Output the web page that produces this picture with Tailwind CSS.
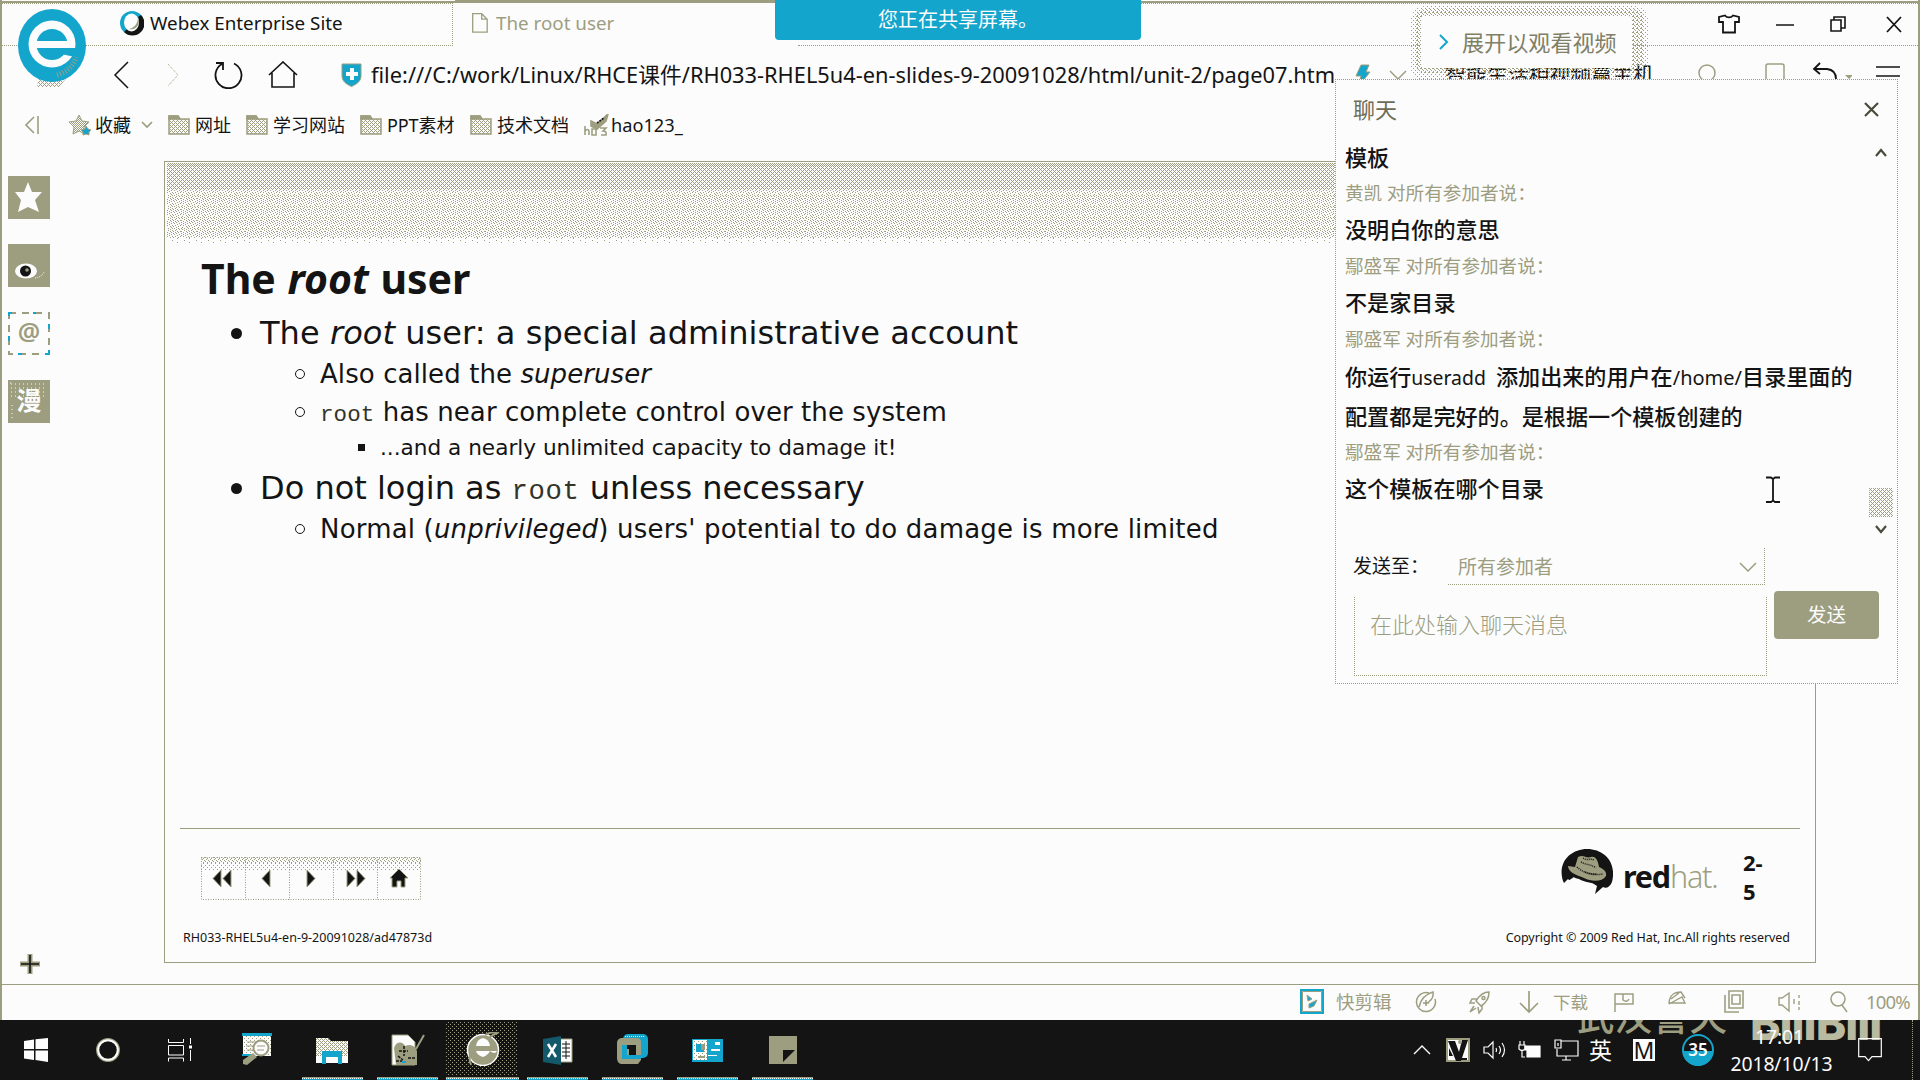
<!DOCTYPE html>
<html lang="zh-CN">
<head>
<meta charset="utf-8">
<title>The root user</title>
<script src="https://cdn.jsdelivr.net/npm/@tailwindcss/browser@4"></script>
</head>
<body class="relative flex h-[1080px] w-[1920px] flex-col overflow-hidden bg-[#fcfcfc] font-['Noto_Sans','Noto_Sans_CJK_SC',sans-serif] text-[#141414]">

<!-- shared dither patterns -->
<svg class="absolute size-0">
  <defs>
    <pattern id="d50" width="2" height="2" patternUnits="userSpaceOnUse"><path d="M0 0h1v1H0zM1 1h1v1H1z" fill="#9d9e80" shape-rendering="crispEdges"/></pattern>
    <pattern id="d37" width="4" height="4" patternUnits="userSpaceOnUse"><path d="M0 0h1v1H0zM2 0h1v1H2zM1 1h1v1H1zM0 2h1v1H0zM2 2h1v1H2zM3 3h1v1H3z" fill="#9d9e80" shape-rendering="crispEdges"/></pattern>
    <pattern id="d25" width="4" height="4" patternUnits="userSpaceOnUse"><path d="M0 0h1v1H0zM2 1h1v1H2zM1 2h1v1H1zM3 3h1v1H3z" fill="#9d9e80" shape-rendering="crispEdges"/></pattern>
    <pattern id="d12" width="4" height="4" patternUnits="userSpaceOnUse"><path d="M0 0h1v1H0zM2 2h1v1H2z" fill="#9d9e80" shape-rendering="crispEdges"/></pattern>
    <pattern id="dn" width="16" height="11" patternUnits="userSpaceOnUse"><path d="M0 0h1v1H0zM3 0h1v1H3zM7 0h1v1H7zM9 0h1v1H9zM13 0h1v1H13zM1 1h1v1H1zM5 1h1v1H5zM11 1h1v1H11zM14 1h1v1H14zM3 2h1v1H3zM7 2h1v1H7zM10 2h1v1H10zM0 3h1v1H0zM5 3h1v1H5zM8 3h1v1H8zM12 3h1v1H12zM15 3h1v1H15zM2 4h1v1H2zM6 4h1v1H6zM10 4h1v1H10zM13 4h1v1H13zM0 5h1v1H0zM4 5h1v1H4zM8 5h1v1H8zM11 5h1v1H11zM2 6h1v1H2zM6 6h1v1H6zM9 6h1v1H9zM14 6h1v1H14zM0 7h1v1H0zM4 7h1v1H4zM12 7h1v1H12zM7 8h1v1H7zM10 8h1v1H10zM15 8h1v1H15zM2 8h1v1H2zM5 9h1v1H5zM8 9h1v1H8zM13 9h1v1H13zM1 10h1v1H1zM11 10h1v1H11zM6 10h1v1H6z" fill="#9d9e80" shape-rendering="crispEdges"/></pattern>
    <pattern id="d3" width="12" height="4" patternUnits="userSpaceOnUse"><path d="M0 0h1v1H0zM7 2h1v1H7z" fill="#9d9e80" shape-rendering="crispEdges"/></pattern>
    <pattern id="dc" width="4" height="3" patternUnits="userSpaceOnUse"><path fill="#14a5cc" d="M0 0h4v3H0z"/><path d="M0 1h1v1H0zM2 1h1v1H2z" fill="#fcfcfc"/></pattern>
  </defs>
</svg>

<!-- window frame -->
<div class="absolute left-0 top-0 h-[1020px] w-0.5 bg-[#9d9e80]"></div>
<div class="absolute right-0 top-0 h-[1020px] w-0.5 bg-[#9d9e80]"></div>
<div class="absolute left-0 top-px h-0.5 w-full bg-[#9d9e80]"></div>
<div class="absolute left-[455px] top-0 h-[3px] w-80 bg-[#9d9e80]"></div>

<!-- tab row -->
<header class="flex h-[46px] shrink-0 pl-0.5 pt-[3px]">
  <div class="flex w-[451px] items-center border-b border-r border-t border-dotted border-[#9d9e80] pb-1 pl-[118px]">
    <svg class="h-[26px] w-6" viewBox="0 0 24 26"><circle cx="12" cy="13" r="12" fill="#14a5cc"/><path d="M21 5a12 12 0 0 1-17 17l3-3c6 4 14-4 11-12z" fill="#141414"/><ellipse cx="11.5" cy="12.500" rx="7.500" ry="9" fill="#fcfcfc"/><path d="M18 7c3 7-2 14-9 12 5-1 9-5 9-12z" fill="#9d9e80"/></svg>
    <span class="ml-[6px] text-[18.8px] leading-6">Webex Enterprise Site</span>
  </div>
  <div class="flex w-[345px] items-center pb-1 pl-[19px] text-[#9d9e80]">
    <svg class="h-5 w-4" viewBox="0 0 16 20" fill="none" stroke="currentColor" stroke-width="1.300"><path d="M.7.700h9l5.500 5.500v13H.7zM9.700.700v5.500h5.500"/></svg>
    <span class="ml-2 text-[18.8px] leading-6">The root user</span>
  </div>
  <div class="flex flex-1 items-center justify-end border-b border-t border-dotted border-[#9d9e80] pb-0.5 pr-[18px]">
    <svg class="h-5 w-[22px]" viewBox="0 0 22 20" fill="none" stroke="currentColor" stroke-width="1.800"><path d="M7 1.500c2 2.500 6 2.500 8 0l6 1.500v5h-4v10.500H5V8H1V3z"/></svg>
    <svg class="ml-9 h-5 w-[18px]" viewBox="0 0 18 20" stroke="currentColor" stroke-width="1.500"><path d="M0 11h18"/></svg>
    <svg class="ml-9 h-5 w-4" viewBox="0 0 16 20" fill="none" stroke="currentColor" stroke-width="1.600"><path d="M1 6h10v11H1zM4 6V3h11v11h-4"/></svg>
    <svg class="ml-10 h-5 w-4" viewBox="0 0 16 20" stroke="currentColor" stroke-width="1.800"><path d="m1 3 14 15M15 3 1 18"/></svg>
  </div>
</header>

<!-- navigation row -->
<nav class="flex h-[58px] shrink-0 items-center pl-[113px]">
  <svg class="h-7 w-4" viewBox="0 0 16 28" fill="none" stroke="currentColor" stroke-width="1.500"><path d="M15 1 2 14l13 13"/></svg>
  <svg class="ml-[38px] h-7 w-3" viewBox="0 0 12 28" fill="none" stroke="#9d9e80" stroke-dasharray="1 1"><path d="m1 3 10 11L1 25"/></svg>
  <svg class="ml-[34px] h-7 w-[30px]" viewBox="0 0 30 28" fill="none" stroke="currentColor" stroke-width="1.800"><path d="M21 2.500A13 13 0 1 1 9 3M3 2h7v7"/></svg>
  <svg class="ml-[25px] h-7 w-[30px]" viewBox="0 0 30 28" fill="none" stroke="currentColor" stroke-width="1.600"><path d="M1 14 15 1l14 13M4 12v14h22V12"/></svg>
  <svg class="ml-[43px] h-6 w-[21px]" viewBox="0 0 21 24"><path d="M1 1h19v12c0 5-4 8-9.500 10.500C5 21 1 18 1 13z" fill="#14a5cc" stroke="#9d9e80"/><path d="M9 5h4v4h4v4h-4v4H9v-4H5V9h4z" fill="#fcfcfc"/></svg>
  <span class="ml-[9px] w-[969px] whitespace-nowrap text-[21.8px] leading-8">file:///C:/work/Linux/RHCE课件/RH033-RHEL5u4-en-slides-9-20091028/html/unit-2/page07.htm</span>
  <svg class="ml-[15px] h-7 w-4" viewBox="0 0 16 28"><path d="M6 4h8l-3 7h4L3 26l3-11H1z" fill="#14a5cc" stroke="#9d9e80"/></svg>
  <svg class="ml-[18px] h-4 w-[18px] text-[#9d9e80]" viewBox="0 0 18 16" fill="none" stroke="currentColor" stroke-width="1.500"><path d="m1 4 8 8 8-8"/></svg>
  <span class="ml-[38px] w-[208px] whitespace-nowrap pb-[3px] text-[20.9px] leading-8">智能生活相视频赢主机</span>
  <svg class="ml-[45px] h-7 w-5 text-[#9d9e80]" viewBox="0 0 20 28" fill="none" stroke="currentColor" stroke-width="1.500"><circle cx="9" cy="12" r="8"/><path d="m15 18 4 6"/></svg>
  <svg class="ml-[46px] h-7 w-[22px] text-[#9d9e80]" viewBox="0 0 22 28" fill="none" stroke="currentColor" stroke-width="1.500"><rect x="2" y="3" width="18" height="18" rx="2"/></svg>
  <svg class="ml-[26px] h-7 w-10" viewBox="0 0 40 28" fill="none" stroke="currentColor" stroke-width="1.800"><path d="M8 2 2 8l6 5M2 8h13q9 1 9 10v3"/><path d="M33 14h8l-4 4z" fill="#9d9e80" stroke="none"/></svg>
  <svg class="ml-[24px] h-7 w-6" viewBox="0 0 24 28" stroke="currentColor" stroke-width="1.500"><path d="M0 6h24M0 15h24"/></svg>
</nav>

<!-- bookmarks row -->
<div class="flex h-[45px] shrink-0 items-center pb-[3px] pl-[25px] text-[18px] leading-6">
  <svg class="h-[18px] w-[14px] text-[#9d9e80]" viewBox="0 0 14 18" fill="none" stroke="currentColor" stroke-width="1.600"><path d="M9 1 1 9l8 8M13 0v18"/></svg>
  <svg class="ml-[30px] h-[22px] w-[23px]" viewBox="0 0 23 22"><path d="m10 1 3 6 7 1-5 5 1 7-6-3-6 3 1-7-5-5 7-1z" fill="url(#d50)" stroke="#9d9e80"/><path d="m17 12 2 3 3 1-2 2v3l-3-1-3 1v-3l-2-2 4-1z" fill="#14a5cc" stroke="#9d9e80"/></svg>
  <span class="ml-[3px] w-9">收藏</span>
  <svg class="ml-2.5 h-2.5 w-3 text-[#9d9e80]" viewBox="0 0 12 10" fill="none" stroke="currentColor" stroke-width="1.700"><path d="m1 2 5 5 5-5"/></svg>
  <svg class="ml-[15px] h-5 w-[22px]" viewBox="0 0 22 20" stroke="#9d9e80" stroke-width="1.500"><path d="M1 1h9l2 3h9v15H1z" fill="url(#d37)"/><path d="M1 1h9l2 3H1z" fill="#9d9e80"/></svg>
  <span class="ml-[5px] w-9">网址</span>
  <svg class="ml-[15px] h-5 w-[22px]" viewBox="0 0 22 20" stroke="#9d9e80" stroke-width="1.500"><path d="M1 1h9l2 3h9v15H1z" fill="url(#d37)"/><path d="M1 1h9l2 3H1z" fill="#9d9e80"/></svg>
  <span class="ml-[5px] w-[72px]">学习网站</span>
  <svg class="ml-[15px] h-5 w-[22px]" viewBox="0 0 22 20" stroke="#9d9e80" stroke-width="1.500"><path d="M1 1h9l2 3h9v15H1z" fill="url(#d37)"/><path d="M1 1h9l2 3H1z" fill="#9d9e80"/></svg>
  <span class="ml-[5px] w-[68px] whitespace-nowrap tracking-[-0.1px]">PPT素材</span>
  <svg class="ml-[15px] h-5 w-[22px]" viewBox="0 0 22 20" stroke="#9d9e80" stroke-width="1.500"><path d="M1 1h9l2 3h9v15H1z" fill="url(#d37)"/><path d="M1 1h9l2 3H1z" fill="#9d9e80"/></svg>
  <span class="ml-[5px] w-[72px]">技术文档</span>
  <svg class="ml-[15px] h-[22px] w-[25px]" viewBox="0 0 25 22" fill="none" stroke="#9d9e80" stroke-width="1.600"><path d="M7 7l6 3L24 0l-2 7-9 8-6-3z" fill="#9d9e80"/><path d="M1 21v-9M1 17q3-3 4 0v4M8 15h4v6H8zM16 14h6l-3 3q4 0 3 4h-5"/><path d="m13 9 7-5" stroke="#141414" stroke-dasharray="2 1"/></svg>
  <span class="ml-[2px] text-[18.2px]">hao123_</span>
</div>

<!-- page area -->
<main class="flex min-h-0 flex-1">
  <aside class="flex w-[164px] flex-col pb-[10px] pl-2 pt-[27px]">
    <svg class="h-[43px] w-[42px]" viewBox="0 0 42 43"><path d="M0 0h42v43H0z" fill="#9d9e80"/><path d="m20 6 4 10h10l-7 8 4 12-11-5-10 5 3-12-6-8h9z" fill="#fcfcfc"/></svg>
    <svg class="mt-[25px] h-[43px] w-[42px]" viewBox="0 0 42 43"><path d="M0 0h42v43H0z" fill="#9d9e80"/><ellipse cx="18" cy="27" rx="11" ry="7.500" fill="#fcfcfc"/><circle cx="17.500" cy="27" r="5.500" fill="#141414"/><circle cx="19" cy="26" r="1.800" fill="#9d9e80"/><path d="M27 34q7-1 9-6" stroke="#fcfcfc" stroke-dasharray="1 1" fill="none"/></svg>
    <svg class="mt-[25px] h-[43px] w-[42px]" viewBox="0 0 42 43"><rect x="1" y="1" width="40" height="41" fill="none" stroke="#9d9e80" stroke-width="2" stroke-dasharray="7 6"/><path d="M1 4V1h3M28 1h-3M41 12v5M1 24v5M10 42h4M37 42h4v-4" stroke="#14a5cc" stroke-width="2" fill="none"/><text x="21" y="29" text-anchor="middle" class="fill-[#9d9e80] font-['Noto_Sans'] text-[25px] font-semibold">@</text></svg>
    <svg class="mt-[25px] h-[43px] w-[42px]" viewBox="0 0 42 43"><path d="M0 0h42v43H0z" fill="#9d9e80"/><path d="M2 3h1v1H2zM4 38V23M3 4h36M3 8h36M3 12h36M3 16h36" stroke="#fcfcfc" stroke-dasharray="1 3" fill="none"/><text x="21" y="30" text-anchor="middle" class="fill-[#fcfcfc] font-['Noto_Sans_CJK_SC'] text-[25px] font-bold">漫</text></svg>
    <svg class="ml-3 mt-auto h-5 w-5" viewBox="0 0 20 20"><path d="M7.500 0h5v20h-5zM0 7.500h20v5H0z" fill="#9d9e80"/><path d="M9.200 1h1.600v18H9.200zM1 9.200h18v1.600H1z" fill="#141414"/></svg>
  </aside>

  <article class="mb-[21px] mt-3 flex w-[1652px] flex-col border border-[#9d9e80] font-['DejaVu_Sans','Noto_Sans_CJK_SC',sans-serif]">
    <svg class="h-[84px] w-full shrink-0"><path d="M2 1h1648v3H2z" fill="url(#d50)"/><path d="M2 4h1648v24H2z" fill="url(#d37)"/><path d="M2 28h1648v48H2z" fill="url(#dn)"/><path d="M4 76h1640v6H4z" fill="url(#d3)"/></svg>
    <h1 class="h-16 pl-9 font-['Noto_Sans'] text-[41px] font-bold leading-[64px]">The <i class="ml-px">root</i><span class="ml-px"> user</span></h1>
    <div class="flex h-[46px] items-center pl-[66px]"><b class="size-[11px] rounded-full bg-[#141414]"></b><p class="ml-[18px] text-[32px] leading-[46px] tracking-[0.06px]">The <i>root</i> user: a special administrative account</p></div>
    <div class="flex h-[36px] items-center pl-[130px]"><b class="size-2.5 rounded-full border border-[#141414]"></b><p class="ml-[15px] text-[26px] leading-[36px] tracking-[0.08px]">Also called the <i>superuser</i></p></div>
    <div class="flex h-[40px] items-center pl-[130px]"><b class="size-2.5 rounded-full border border-[#141414]"></b><p class="ml-[15px] text-[26px] leading-[40px] tracking-[0.08px]"><span class="font-['Liberation_Mono'] text-[22.5px] leading-none text-[#33342a]">root</span> has near complete control over the system</p></div>
    <div class="flex h-[31px] items-center pl-[193px]"><b class="size-[7px] bg-[#141414]"></b><p class="ml-[15px] text-[21.6px] leading-[31px]">...and a nearly unlimited capacity to damage it!</p></div>
    <div class="flex h-[50px] items-center pl-[66px]"><b class="size-[11px] rounded-full bg-[#141414]"></b><p class="ml-[18px] text-[32px] leading-[50px]">Do not login as <span class="font-['Liberation_Mono'] text-[27.3px] leading-none tracking-[0.6px] text-[#33342a]">root</span> unless necessary</p></div>
    <div class="flex h-[32px] items-center pl-[130px]"><b class="size-2.5 rounded-full border border-[#141414]"></b><p class="ml-[15px] text-[26px] leading-[32px] tracking-[0.18px]">Normal (<i>unprivileged</i>) users' potential to do damage is more limited</p></div>

    <footer class="mx-[15px] mt-auto flex h-[134px] flex-col border-t border-[#9d9e80]">
      <div class="mt-[19px] flex h-[62px] justify-between pl-[21px] pr-[35px]">
        <svg class="mt-[9px] h-11 w-[221px]" viewBox="0 0 221 44">
          <path d="M0 0h220v6H0z" fill="url(#d25)"/><path d="M0 6h220v7H0z" fill="url(#d12)"/>
          <path d="M.5.500h219v42H.5zM44.500 0v43M88.500 0v43M132.500 0v43M176.500 0v43" fill="none" stroke="#9d9e80" stroke-dasharray="1 1.500"/>
          <g fill="#141414" stroke="#9d9e80"><path d="M20 13v17l-8-8.500zM30 13v17l-8-8.500zM69 13v17l-8-8.500zM106 13v17l8-8.500zM146 13v17l8-8.500zM156 13v17l8-8.500z"/><path d="m198 12 9 9h-3v9h-4v-6h-4v6h-5v-9h-2z"/></g>
        </svg>
        <div class="flex font-['Noto_Sans']">
          <svg class="h-[46px] w-[52px]" viewBox="0 0 52 46"><path d="M2 33C-4 14 10 1 26 1c17 0 30 13 25 33-2 5-6 7-9 5l-8 7 2-8c-6-5-12-3-18-7l-4-1-4 4-3-3-4 4z" fill="#141414"/><path d="M17 9c6-3 8 2 13 0 5-1 7 4 8 10 5 2 8 5 7 9-4 6-14 6-22 2C15 27 7 24 7 18l7 1z" fill="#9d9e80"/><path d="M22 10c4 3 8 0 11 2M16 19c6 6 14 7 20 7M20 14c5 3 10 2 15 6M24 24c5 3 12 3 18 2" stroke="#141414" stroke-width="1.500" stroke-dasharray="1 1" fill="none"/><path d="M7 33l6-4 8 8 9-1 3 4-4 2z" fill="#fcfcfc"/></svg>
          <p class="-mt-px ml-[10px] w-[98px] whitespace-nowrap text-[30.5px] leading-[58px] tracking-[-1.2px]"><b>red</b><span class="font-light text-[#9d9e80]">hat.</span></p>
          <div class="ml-[22px] w-[22px] text-[22px] font-bold leading-[29px]"><p>2-</p><p>5</p></div>
        </div>
      </div>
      <div class="flex justify-between pl-[3px] pr-2.5 pt-[18px] font-['Noto_Sans'] text-[12.5px] leading-[20px]"><p>RH033-RHEL5u4-en-9-20091028/ad47873d</p><p class="tracking-[-0.06px]">Copyright © 2009 Red Hat, Inc.All rights reserved</p></div>
    </footer>
  </article>
</main>

<!-- browser status bar -->
<div class="mx-0.5 flex h-9 shrink-0 items-center justify-end border-t border-[#9d9e80] pb-0.5 pr-2 text-[18.5px] leading-6 text-[#9d9e80]">
  <svg class="h-[25px] w-6" viewBox="0 0 24 25" fill="none"><rect x="1" y="1" width="22" height="23" stroke="#14a5cc" stroke-width="2"/><path d="M2.500 2.500h19v20h-19z" stroke="#9d9e80"/><path d="m7 6 5 4-4 2zM9 15l8-4-3 6-5 2z" fill="#14a5cc" stroke="#9d9e80"/></svg>
  <span class="ml-3 w-[55px] whitespace-nowrap">快剪辑</span>
  <svg class="ml-6 h-6 w-[22px]" viewBox="0 0 22 24" fill="none" stroke="currentColor" stroke-width="1.500"><path d="M14 3A9.500 9.500 0 1 0 20 9M4 17C6 8 11 4 18 2c1 6-3 10-8 12M11 10v6M8 13h6"/></svg>
  <svg class="ml-8 h-6 w-[22px]" viewBox="0 0 22 24" fill="none" stroke="currentColor" stroke-width="1.500"><path d="M20 2c-6 0-10 4-13 9l5 5c5-3 8-7 8-14zM8 9H3l-2 4h5M13 15v4l-3 4-1-6M5 16l-4 6 6-4"/><circle cx="14.500" cy="8" r="1.500"/></svg>
  <svg class="ml-7 h-6 w-5" viewBox="0 0 20 24" fill="none" stroke="currentColor" stroke-width="1.700"><path d="M10 1v21M1 13l9 9 9-9"/></svg>
  <span class="ml-3.5 w-[35px] whitespace-nowrap text-[17.6px]">下载</span>
  <svg class="ml-[26px] h-6 w-5" viewBox="0 0 20 24" fill="none" stroke="currentColor" stroke-width="1.500"><path d="M1 22V4h18v10H1M9 4v6q4 3 6-1"/></svg>
  <svg class="ml-[34px] h-6 w-[18px]" viewBox="0 0 18 24" fill="none" stroke="currentColor" stroke-width="1.400"><path d="M1 14C1 6 6 2 13 2l4 6M1 14l13-7 3 6H1M3 9l8-6"/></svg>
  <svg class="ml-[38px] h-6 w-[20px]" viewBox="0 0 20 24" fill="none" stroke="currentColor" stroke-width="1.600"><path d="M5 1h14v17H5zM1 5v17h14M8 5h8v9H8z"/></svg>
  <svg class="ml-[34px] h-6 w-[24px]" viewBox="0 0 24 24" fill="none" stroke="currentColor" stroke-width="1.400"><path d="M1 8v7h3l7 6V3L4 8z"/><path d="M16 9v5M21 5v3M21 11v4M21 17v3"/></svg>
  <svg class="ml-[28px] h-6 w-[18px]" viewBox="0 0 18 24" fill="none" stroke="currentColor" stroke-width="1.500"><circle cx="8" cy="9" r="7"/><path d="m12 15 5 7"/></svg>
  <span class="ml-[18px] w-[44px] whitespace-nowrap text-[18.5px] tracking-[-0.8px]">100%</span>
</div>

<!-- taskbar -->
<div class="relative flex h-[60px] shrink-0 overflow-hidden bg-[#141414] text-[#fcfcfc]">
  <div class="absolute left-[1577px] top-[-32px] whitespace-nowrap text-[37.500px] font-medium leading-[56px] text-[#9d9e80]">武汉誉天</div>
  <div class="absolute left-[1750px] top-[-25px] whitespace-nowrap font-['Inter'] text-[46px] font-extrabold leading-[56px] tracking-[-1px] text-[#b9ba9f]">BiliBili</div>

  <div class="flex w-[216px] items-center gap-12 pl-6">
    <svg class="size-6" viewBox="0 0 24 24" fill="currentColor"><path d="m0 3 10-1.500V11H0zM11.500 1.300 24 0v11H11.500zM0 12.500h10V22L0 20.500zM11.500 12.500H24V24l-12.500-2z"/></svg>
    <svg class="size-6" viewBox="0 0 24 24" fill="none"><circle cx="12" cy="12" r="10.500" stroke="#9d9e80" stroke-width="3"/><circle cx="12" cy="12" r="9.800" stroke="#fcfcfc" stroke-width="2"/></svg>
    <svg class="size-6" viewBox="0 0 24 24" fill="none" stroke="currentColor"><path d="M.5 1v3.500h15V1M.5 7.500h15v9.500H.5zM.5 23.500V20h15v3.500M22.500 0v6M22.500 12v11"/><path d="M21 7.500h3v3h-3z" fill="currentColor" stroke="none"/></svg>
  </div>
  <div class="flex w-[77px] flex-col items-center pl-1.5 pt-3"><svg class="h-[34px] w-[31px]" viewBox="0 0 31 34"><path d="M1 2h28v22H1z" fill="#fcfcfc"/><path d="M1 4h28v20H1z" fill="url(#d12)"/><path d="M0 1h30v3H0zM0 22h10v2H0z" fill="#14a5cc"/><path d="M5 10h11M4 14h10M5 18h10" stroke="#9d9e80"/><circle cx="19" cy="16" r="7.500" fill="#fcfcfc" stroke="#9d9e80" stroke-width="2"/><path d="M15 14h8M15 18h7" stroke="#9d9e80"/><path d="m11 21 4 4-10 8-4-1v-4z" fill="#9d9e80"/></svg></div>
  <div class="flex w-[78px] flex-col items-center justify-between pt-[17px]"><svg class="h-7 w-8" viewBox="0 0 32 28"><path d="M0 1h12l3 3h17v22H0z" fill="#fcfcfc"/><path d="M0 1h12l3 3h17v15H0z" fill="url(#d37)"/><path d="M6 27V14h20v13h-4v-7H10v7z" fill="#14a5cc"/></svg><svg class="h-[3px] w-[61px]"><path d="M0 0h61v3H0z" fill="url(#dc)"/><path d="M0 0h61v1H0z" fill="#9d9e80"/></svg></div>
  <div class="flex w-[73px] flex-col items-center justify-between pt-[14px]"><svg class="h-8 w-[34px]" viewBox="0 0 34 32"><path d="M1 1h16l7 7v23H1z" fill="#fcfcfc" stroke="#9d9e80"/><path d="m33 1-8 14" stroke="#9d9e80" stroke-width="2"/><path d="M3 14c2-7 9-7 11-2 6-3 13 1 12 8v11H5z" fill="#9d9e80"/><path d="M8 17h9M13 12v10M17 24h8M7 22l5 4M5 27h6" stroke="#141414" stroke-width="1.500" stroke-dasharray="3 1"/><path d="M11 28h4" stroke="#14a5cc" stroke-width="2"/></svg><svg class="h-[3px] w-[61px]"><path d="M0 0h61v3H0z" fill="url(#dc)"/><path d="M0 0h61v1H0z" fill="#9d9e80"/></svg></div>
  <div class="relative ml-0.5 flex w-[73px] flex-col items-center justify-between pt-3"><svg class="absolute left-0 top-0 h-[57px] w-[73px]"><rect y="1" width="72" height="55" rx="4" fill="url(#d12)"/></svg><svg class="relative h-[34px] w-[34px]" viewBox="0 0 34 34"><circle cx="17" cy="18" r="15.500" fill="#9d9e80" stroke="#fcfcfc" stroke-width="1.500"/><path d="M17 6q6 1 7 8H10q1-7 7-8zM10 19h21q-2 4-7 0-2 4-7 6-6-2-7-6z" fill="#fcfcfc"/><path d="M19 3q7-4 12-2-5 2-8 5M4 22q-1 6 1 11" fill="none" stroke="#9d9e80" stroke-width="2"/></svg><svg class="relative h-[3px] w-[73px]"><path d="M0 0h73v3H0z" fill="url(#dc)"/><path d="M0 0h73v1H0z" fill="#9d9e80"/></svg></div>
  <div class="flex w-[77px] flex-col items-center justify-between pt-4"><svg class="h-[30px] w-[30px]" viewBox="0 0 30 30"><path d="M17 3h12v23H17z" fill="#fcfcfc" stroke="#9d9e80"/><path d="M19 8h8M19 12h8M19 16h8M19 20h8M23 5v18" stroke="#141414"/><path d="M0 3 18 0v29L0 26z" fill="#14586b"/><path d="m5 8 8 13M13 8 5 21" stroke="#fcfcfc" stroke-width="2.500"/></svg><svg class="h-[3px] w-[61px]"><path d="M0 0h61v3H0z" fill="url(#dc)"/><path d="M0 0h61v1H0z" fill="#9d9e80"/></svg></div>
  <div class="flex w-[73px] flex-col items-center justify-between pt-3"><svg class="h-[34px] w-[32px]" viewBox="0 0 32 34"><rect x="6" y="2" width="25" height="24" rx="5" fill="#14a5cc"/><path d="M8 3h20v3H8z" fill="url(#dc)"/><path d="M4 6h16q4 0 4 4v18l-3 4H4q-4-1-4-6V11q0-4 4-5z" fill="#9d9e80"/><path d="M5 13h5v10h14v4H5z" fill="#14a5cc"/><path d="M10 13h9v10H12v-6h-2z" fill="#141414"/></svg><svg class="h-[3px] w-[61px]"><path d="M0 0h61v3H0z" fill="url(#dc)"/><path d="M0 0h61v1H0z" fill="#9d9e80"/></svg></div>
  <div class="flex w-[77px] flex-col items-center justify-between pt-[19px]"><svg class="h-[23px] w-[31px]" viewBox="0 0 31 23"><path d="M0 0h31v23H0z" fill="#14a5cc"/><path d="M1 1h14v20H1z" fill="#fcfcfc"/><path d="M1 1h14v20H1z" fill="url(#d12)"/><path d="M4 5h8v8H4zM16 5h5v4h-5z" fill="#14a5cc"/><path d="M9 5h4v6H9zM6 17h7v2H6z" fill="#9d9e80"/><path d="M23 3h5v3h-5zM19 10h9v2h-9zM16 16h9v1h-9z" fill="#fcfcfc"/></svg><svg class="h-[3px] w-[61px]"><path d="M0 0h61v3H0z" fill="url(#dc)"/><path d="M0 0h61v1H0z" fill="#9d9e80"/></svg></div>
  <div class="flex w-[73px] flex-col items-center justify-between pt-4"><svg class="h-7 w-7" viewBox="0 0 28 28"><path d="M0 0h28v28H0z" fill="#9d9e80"/><path d="M14 14h12L14 26z" fill="#141414"/></svg><svg class="h-[3px] w-[61px]"><path d="M0 0h61v3H0z" fill="url(#dc)"/><path d="M0 0h61v1H0z" fill="#9d9e80"/></svg></div>

  <div class="relative ml-auto flex items-center pr-[7px]">
    <svg class="h-2.5 w-[18px]" viewBox="0 0 18 10" fill="none" stroke="currentColor" stroke-width="1.400"><path d="m1 9 8-8 8 8"/></svg>
    <svg class="ml-[15px] size-6" viewBox="0 0 24 24"><path d="M1 1h22v22H1z" fill="#fcfcfc" stroke="#9d9e80" stroke-width="2"/><path d="M2 3h7l4 11 3-12h6l-7 21h-5zM15 20h6v2h-6zM3 10l4 8H3z" fill="#141414"/><circle cx="14" cy="4" r="2" fill="#9d9e80"/></svg>
    <svg class="ml-[13px] h-5 w-[23px]" viewBox="0 0 23 20" fill="none" stroke="currentColor" stroke-width="1.200"><path d="M1 7v6h4l5 5V2L5 7zM13 8q1 2 0 4M16 6q3 4 0 8M19 3q5 7 0 14"/></svg>
    <svg class="ml-[12px] h-[18px] w-6" viewBox="0 0 24 18" fill="none" stroke="currentColor" stroke-width="1.200"><path d="M7 5h15v11H9V9H7z" fill="currentColor"/><path d="M1 4h6v4q-3 3-6 0zM2 0v4M6 0v4M4 9v7h3"/></svg>
    <svg class="ml-[12px] h-6 w-[25px]" viewBox="0 0 25 24" fill="none" stroke="currentColor" stroke-width="1.200"><path d="M7 3h17v15H3v-7M1 2h6v8H1zM4 5v3M12 18v4M8 22h9"/></svg>
    <span class="ml-[10px] w-6 text-[23px] leading-8">英</span>
    <span class="ml-[20px] flex h-[22px] w-[22px] items-center justify-center bg-[#fcfcfc] text-[23px] leading-[22px] text-[#141414]">M</span>
    <div class="relative ml-[27px] flex size-8 items-center justify-center">
      <svg class="absolute inset-0 size-8" viewBox="0 0 32 32"><path d="M1 17h30A15 15 0 0 1 1 17" fill="#14a5cc"/><circle cx="16" cy="16" r="15" fill="none" stroke="#14a5cc" stroke-width="2"/></svg>
      <span class="relative text-[17px] font-semibold leading-6">35</span>
    </div>
    <div class="ml-[15px] flex w-[105px] flex-col text-center text-[19.400px] leading-[27.5px] tracking-[-0.1px]"><span class="pr-1">17:01</span><span>2018/10/13</span></div>
    <svg class="ml-[24px] h-6 w-6" viewBox="0 0 24 24" fill="none" stroke="currentColor" stroke-width="1.200"><path d="M.7.700h22.600v18H14l-3.500 4-3.500-4H.7z"/></svg>
    <div class="ml-[30px] h-[60px] border-l border-dotted border-[#9d9e80]"></div>
  </div>
</div>

<!-- browser logo -->
<svg class="absolute left-[17px] top-[9px] h-[78px] w-[70px]" viewBox="0 0 70 78"><path d="M22 66h30l-10 12H20z" fill="url(#d37)"/><ellipse cx="35" cy="36.500" rx="34" ry="36.500" fill="#14a5cc"/><circle cx="35" cy="35" r="23.500" fill="#fcfcfc"/><circle cx="35" cy="35.500" r="15.500" fill="#14a5cc"/><path d="M19 32h39v7H19z" fill="#fcfcfc"/><path d="M34 39h28l-4 9-14-3H34z" fill="#14a5cc"/><path d="M40 66q16-5 19-18" stroke="#9d9e80" stroke-width="5" stroke-dasharray="1 2" fill="none"/></svg>

<!-- sharing banner -->
<div class="absolute left-[775px] top-0 flex h-10 w-[366px] items-center justify-center rounded-b-sm bg-[#14a5cc] text-[20px] leading-7 text-[#fcfcfc]">您正在共享屏幕。</div>

<!-- expand-video popup -->
<div class="absolute left-[1411px] top-1.5 h-[76px] w-[237px]">
  <svg class="absolute inset-0 h-full w-full"><rect width="237" height="76" rx="14" fill="url(#d12)"/><rect x="5" y="3" width="227" height="64" rx="8" fill="url(#d25)"/></svg>
  <div class="absolute left-2.5 top-2.5 flex h-[52px] w-[211px] items-center rounded bg-[#fcfcfc] pl-[18px] text-[22.1px] leading-8 text-[#7f8066]">
    <svg class="h-4 w-2.5" viewBox="0 0 10 16" fill="none" stroke="#14a5cc" stroke-width="2"><path d="m1 1 7 7-7 7"/></svg><span class="ml-[13px] whitespace-nowrap">展开以观看视频</span>
  </div>
</div>

<!-- chat panel -->
<section class="absolute left-[1335px] top-[79px] flex h-[605px] w-[563px] flex-col border border-dotted border-[#9d9e80] bg-[#fcfcfc]">
  <div class="flex h-[60px] items-center justify-between pb-0.5 pl-[17px] pr-[18px]">
    <h2 class="text-[22px] leading-8 text-[#6c6d56]">聊天</h2>
    <svg class="size-[15px]" viewBox="0 0 15 15" stroke="#4a4b3c" stroke-width="2.200"><path d="m1 1 13 13M14 1 1 14"/></svg>
  </div>
  <div class="flex h-[400px] justify-between pl-[9px] pr-1">
    <div class="w-[520px] text-[22.1px] font-medium">
      <p class="h-[34px] leading-[34px]">模板</p>
      <p class="h-[38px] text-[18.6px] font-normal leading-[38px] text-[#9d9e80]">黄凯 对所有参加者说：</p>
      <p class="h-[35px] leading-[35px]">没明白你的意思</p>
      <p class="h-[38px] text-[18.6px] font-normal leading-[38px] text-[#9d9e80]">鄢盛军 对所有参加者说：</p>
      <p class="h-[35px] leading-[35px]">不是家目录</p>
      <p class="h-[37px] text-[18.6px] font-normal leading-[37px] text-[#9d9e80]">鄢盛军 对所有参加者说：</p>
      <p class="h-[76px] whitespace-nowrap leading-[38px]">你运行<span class="text-[19.400px] font-normal">useradd&nbsp; </span>添加出来的用户在<span class="text-[20px] font-normal">/home/</span>目录里面的<br>配置都是完好的。是根据一个模板创建的</p>
      <p class="h-[37px] text-[18.6px] font-normal leading-[37px] text-[#9d9e80]">鄢盛军 对所有参加者说：</p>
      <p class="h-[37px] leading-[37px]">这个模板在哪个目录</p>
    </div>
    <div class="flex w-6 flex-col items-center pb-[6px] pt-2">
      <svg class="h-2.5 w-3" viewBox="0 0 12 10" fill="none" stroke="#4a4b3c" stroke-width="2.200"><path d="m1 8 5-6 5 6"/></svg>
      <svg class="mt-auto h-[29px] w-6"><path d="M0 0h24v29H0z" fill="url(#d37)"/></svg>
      <svg class="mt-[7px] h-2.5 w-3" viewBox="0 0 12 10" fill="none" stroke="#4a4b3c" stroke-width="2.200"><path d="m1 2 5 6 5-6"/></svg>
    </div>
  </div>
  <div class="flex h-[45px] pl-[17px]">
    <span class="w-[95px] pt-[7px] text-[19px] leading-[38px]">发送至：</span>
    <div class="mt-2 flex h-[37px] w-[317px] items-center justify-between border-b border-r border-dotted border-[#9d9e80] pl-[10px] pr-[7px] pt-0.5 text-[19px] text-[#9d9e80]"><span class="leading-8">所有参加者</span><svg class="h-2.5 w-[18px]" viewBox="0 0 18 10" fill="none" stroke="currentColor" stroke-width="1.500"><path d="m1 1 8 8 8-8"/></svg></div>
  </div>
  <div class="flex pl-[18px] pt-[6px]">
    <div class="mt-[6px] h-[79px] w-[413px] border border-t-0 border-dotted border-[#9d9e80] pl-[15px] pt-2 text-[22px] font-light leading-[38px] text-[#9d9e80]">在此处输入聊天消息</div>
    <button class="ml-[7px] flex h-12 w-[105px] items-center justify-center rounded-sm bg-[#9d9e80] text-[19.500px] leading-7 text-[#fcfcfc]">发送</button>
  </div>
</section>

<!-- text cursor -->
<svg class="absolute left-[1766px] top-[476px] h-[27px] w-[14px]" viewBox="0 0 14 27" fill="none" stroke="#141414" stroke-width="1.800"><path d="M0 1.500h5l2 1.500 2-1.500h5M7 2.500v22M0 26h5l2-1.500L9 26h5"/></svg>
</body>
</html>
